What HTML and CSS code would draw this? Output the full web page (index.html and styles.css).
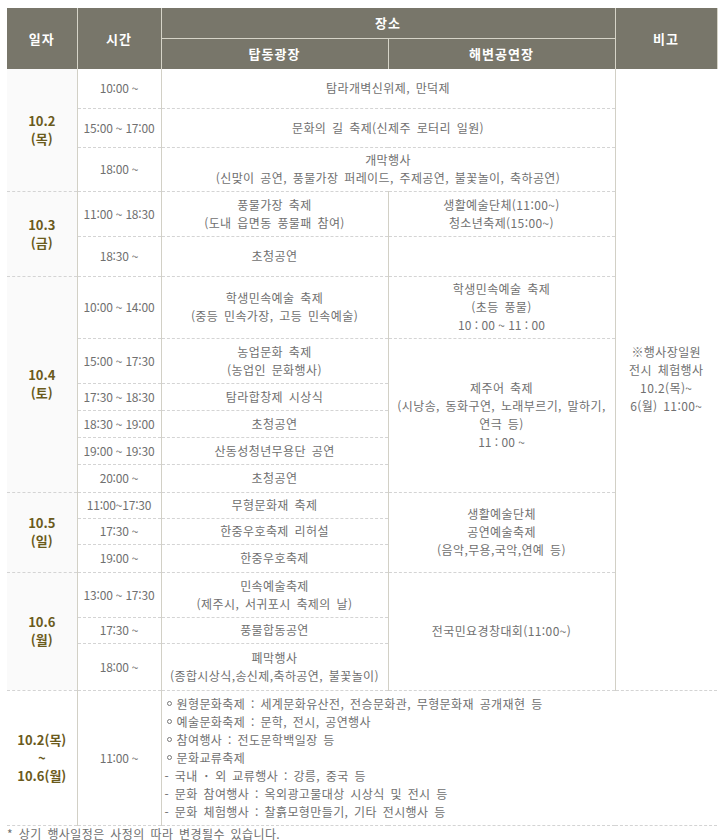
FILE: index.html
```html
<!DOCTYPE html>
<html lang="ko">
<head>
<meta charset="utf-8">
<title>행사일정</title>
<link rel="stylesheet" href="styles.css">
</head>
<body>
<div class="wrap">
<table class="sched">
<colgroup>
<col class="c-date"><col class="c-time"><col class="c-place"><col class="c-place2"><col class="c-note">
</colgroup>
<thead>
<tr class="hr1">
<th rowspan="2">일자</th>
<th rowspan="2">시간</th>
<th colspan="2" class="split">장소</th>
<th rowspan="2" class="last">비고</th>
</tr>
<tr class="hr2">
<th>탑동광장</th>
<th>해변공연장</th>
</tr>
</thead>
<tbody>
<tr class="h39">
<td rowspan="3" class="date">10.2<br>(목)</td>
<td class="time">10:00 ~</td>
<td colspan="2">탐라개벽신위제, 만덕제</td>
<td rowspan="17" class="note">※행사장일원<br>전시 체험행사<br>10.2(목)~<br>6(월) 11:00~</td>
</tr>
<tr class="h39">
<td class="time">15:00 ~ 17:00</td>
<td colspan="2">문화의 길 축제(신제주 로터리 일원)</td>
</tr>
<tr class="h44">
<td class="time">18:00 ~</td>
<td colspan="2">개막행사<br>(신맞이 공연, 풍물가장 퍼레이드, 주제공연, 불꽃놀이, 축하공연)</td>
</tr>
<tr class="h45">
<td rowspan="2" class="date">10.3<br>(금)</td>
<td class="time">11:00 ~ 18:30</td>
<td>풍물가장 축제<br>(도내 읍면동 풍물패 참여)</td>
<td>생활예술단체(11:00~)<br>청소년축제(15:00~)</td>
</tr>
<tr class="h40">
<td class="time">18:30 ~</td>
<td>초청공연</td>
<td></td>
</tr>
<tr class="h62">
<td rowspan="6" class="date">10.4<br>(토)</td>
<td class="time">10:00 ~ 14:00</td>
<td>학생민속예술 축제<br>(중등 민속가장, 고등 민속예술)</td>
<td>학생민속예술 축제<br>(초등 풍물)<br><span class="tm">10 : 00 ~ 11 : 00</span></td>
</tr>
<tr class="h45">
<td class="time">15:00 ~ 17:30</td>
<td>농업문화 축제<br>(농업인 문화행사)</td>
<td rowspan="5">제주어 축제<br>(시낭송, 동화구연, 노래부르기, 말하기,<br>연극 등)<br><span class="tm">11 : 00 ~</span></td>
</tr>
<tr class="h27">
<td class="time">17:30 ~ 18:30</td>
<td>탐라합창제 시상식</td>
</tr>
<tr class="h27">
<td class="time">18:30 ~ 19:00</td>
<td>초청공연</td>
</tr>
<tr class="h27">
<td class="time">19:00 ~ 19:30</td>
<td>산동성청년무용단 공연</td>
</tr>
<tr class="h28">
<td class="time">20:00 ~</td>
<td>초청공연</td>
</tr>
<tr class="h26">
<td rowspan="3" class="date">10.5<br>(일)</td>
<td class="time">11:00~17:30</td>
<td>무형문화재 축제</td>
<td rowspan="3">생활예술단체<br>공연예술축제<br>(음악,무용,국악,연예 등)</td>
</tr>
<tr class="h26">
<td class="time">17:30 ~</td>
<td>한중우호축제 리허설</td>
</tr>
<tr class="h28">
<td class="time">19:00 ~</td>
<td>한중우호축제</td>
</tr>
<tr class="h45">
<td rowspan="3" class="date">10.6<br>(월)</td>
<td class="time">13:00 ~ 17:30</td>
<td>민속예술축제<br>(제주시, 서귀포시 축제의 날)</td>
<td rowspan="3">전국민요경창대회(11:00~)</td>
</tr>
<tr class="h26">
<td class="time">17:30 ~</td>
<td>풍물합동공연</td>
</tr>
<tr class="h47">
<td class="time">18:00 ~</td>
<td>폐막행사<br>(종합시상식,송신제,축하공연, 불꽃놀이)</td>
</tr>
<tr class="h134">
<td class="date plain">10.2(목)<br>~<br>10.6(월)</td>
<td class="time">11:00 ~</td>
<td colspan="3" class="listcell">
<ul class="list">
<li><span class="ring"></span>원형문화축제 : 세계문화유산전, 전승문화관, 무형문화재 공개재현 등</li>
<li><span class="ring"></span>예술문화축제 : 문학, 전시, 공연행사</li>
<li><span class="ring"></span>참여행사 : 전도문학백일장 등</li>
<li><span class="ring"></span>문화교류축제</li>
<li>- 국내<span class="mid">ㆍ</span>외 교류행사 : 강릉, 중국 등</li>
<li>- 문화 참여행사 : 옥외광고물대상 시상식 및 전시 등</li>
<li>- 문화 체험행사 : 찰흙모형만들기, 기타 전시행사 등</li>
</ul>
</td>
</tr>
</tbody>
</table>
<p class="foot">* 상기 행사일정은 사정의 따라 변경될수 있습니다.</p>
</div>
</body>
</html>
```

FILE: styles.css
```css
html, body {
  margin: 0;
  padding: 0;
  background: #fff;
}
body {
  font-family: "Noto Sans CJK KR", "Noto Sans", sans-serif;
  font-size: 12px;
  color: #707070;
}
.wrap {
  padding: 8px 0 0 7px;
}
.sched {
  border-collapse: collapse;
  table-layout: fixed;
  width: 710px;
}
.c-date { width: 70px; }
.c-time { width: 84px; }
.c-place { width: 227px; }
.c-place2 { width: 227px; }
.c-note { width: 102px; }

.sched th {
  background: #78766a;
  color: #fff;
  font-weight: bold;
  font-size: 13px;
  padding: 0;
  border-right: 1px solid #d6d4c8;
  letter-spacing: 1px;
}
.sched th.split {
  border-bottom: 1px solid #d6d4c8;
}
.hr1 { height: 30px; }
.hr2 { height: 31px; }

.sched td {
  padding: 0 2px;
  text-align: center;
  vertical-align: middle;
  line-height: 18px;
  letter-spacing: 0.4px;
  word-spacing: 2px;
  border-right: 1px solid #d2d0c6;
  border-bottom: 1px dashed #d4d4d4;
  white-space: nowrap;
}
.sched td.note {
  border-right: none;
}
.sched td.date {
  background: #fafafa;
  color: #6a5a1c;
  font-weight: bold;
  font-size: 13px;
  line-height: 18px;
  letter-spacing: 0;
  word-spacing: 0;
}
.sched td.date.plain {
  background: #fff;
}
.sched td.time {
  letter-spacing: -0.2px;
  word-spacing: 0;
}
.tm {
  letter-spacing: 0;
  word-spacing: 0;
}
.sched td.listcell {
  text-align: left;
  border-right: none;
  padding: 4px 0 4px 3px;
}
.list {
  list-style: none;
  margin: 0;
  padding: 0;
}
.list li {
  line-height: 18px;
}
.ring {
  display: inline-block;
  width: 3px;
  height: 3px;
  border: 1px solid #777;
  border-radius: 50%;
  margin: 0 5px 0 2px;
  vertical-align: 3px;
}
.mid {
  margin: 0 3px;
  font-weight: bold;
}

.h26 { height: 26px; }
.h27 { height: 27px; }
.h28 { height: 28px; }
.h39 { height: 39px; }
.h40 { height: 40px; }
.h44 { height: 44px; }
.h45 { height: 45px; }
.h47 { height: 47px; }
.h62 { height: 62px; }
.h134 { height: 134px; }

.foot {
  margin: 1px 0 0;
  line-height: 14px;
  letter-spacing: 0.4px;
  word-spacing: 2px;
  color: #707070;
}
```
